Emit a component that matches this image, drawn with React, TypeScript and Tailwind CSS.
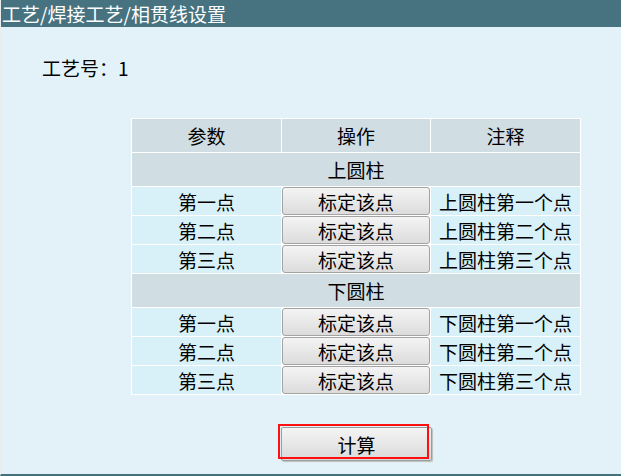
import React from 'react'

const font = { fontFamily: '"Noto Sans CJK SC", "Microsoft YaHei", sans-serif' }

function CalibButton() {
  return (
    <button className="w-full h-full rounded-[3px] border border-[#a3a3a3] bg-gradient-to-b from-[#f4f4f4] to-[#dcdcdc] text-[19px] leading-none text-black">
      标定该点
    </button>
  )
}

function Section({ name, prefix }: { name: string; prefix: string }) {
  const rows = [
    ['第一点', `${prefix}第一个点`],
    ['第二点', `${prefix}第二个点`],
    ['第三点', `${prefix}第三个点`],
  ]
  return (
    <>
      <div className="col-span-3 h-[33px] bg-[#d0dde2] flex items-center justify-center">{name}</div>
      {rows.map(([label, note]) => (
        <React.Fragment key={label}>
          <div className="h-[28px] bg-[#d8f0f7] flex items-center justify-center">{label}</div>
          <div className="h-[28px]">
            <CalibButton />
          </div>
          <div className="h-[28px] bg-[#d8f0f7] flex items-center justify-center">{note}</div>
        </React.Fragment>
      ))}
    </>
  )
}

export default function App() {
  return (
    <div className="w-[621px] h-[476px] bg-[#e2f2f8] flex flex-col border-b-2 border-[#46707c] border-l border-l-[#ececec] text-black" style={font}>
      {/* title bar */}
      <div className="h-[27px] bg-[#47727f] text-white text-[19px] leading-[27px] pl-[1px] whitespace-nowrap">
        工艺/焊接工艺/相贯线设置
      </div>

      <div className="pl-[41px] pt-[28px] text-[19px] leading-[26px]">工艺号：1</div>

      {/* table */}
      <div className="ml-[130px] mt-[37px] w-[450px] grid grid-cols-[149px_148px_149px] gap-px p-px bg-white text-[19px] leading-none">
        <div className="h-[33px] bg-[#d0dde2] flex items-center justify-center">参数</div>
        <div className="h-[33px] bg-[#d0dde2] flex items-center justify-center">操作</div>
        <div className="h-[33px] bg-[#d0dde2] flex items-center justify-center">注释</div>
        <Section name="上圆柱" prefix="上圆柱" />
        <Section name="下圆柱" prefix="下圆柱" />
      </div>

      {/* calculate */}
      <div className="ml-[280px] mt-[32px] relative w-[151px] h-[34px]">
        <button className="w-full h-full rounded-[2px] border border-[#9c9c9c] bg-gradient-to-b from-[#f4f4f4] to-[#dadada] text-[19px] leading-none text-black shadow-[1px_1px_1px_#bdbdbd]">
          计算
        </button>
        <div className="absolute -top-[3px] -left-[3px] w-[151px] h-[35px] border-2 border-[#ff1010] pointer-events-none" />
      </div>
    </div>
  )
}
